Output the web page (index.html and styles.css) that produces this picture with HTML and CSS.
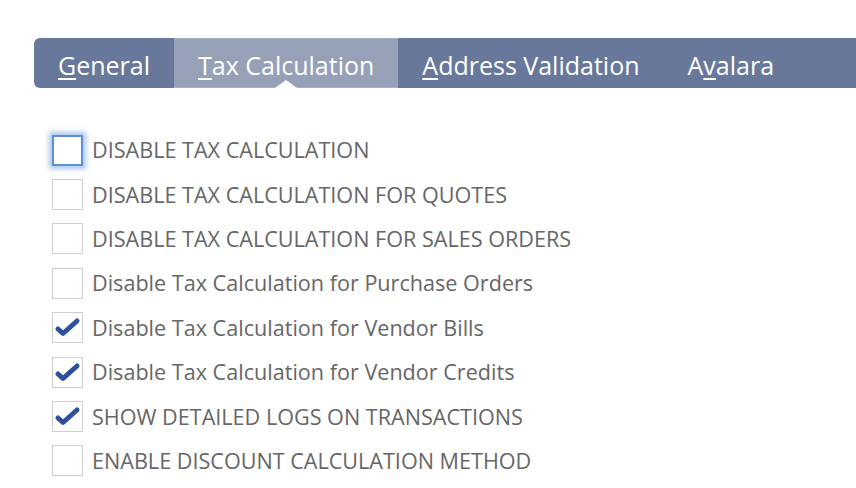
FILE: index.html
```html
<!DOCTYPE html>
<html>
  <head>
    <meta charset="utf-8">
    <title>Tax Settings</title>
    <link rel="stylesheet" href="styles.css">
  </head>
  <body>
    <!-- TABS -->
    <div class="tabs">
      <div class="tab"><u>G</u>eneral</div>
      <div class="tab active"><u>T</u>ax Calculation</div>
      <div class="tab"><u>A</u>ddress Validation</div>
      <div class="tab">A<u>v</u>alara</div>
    </div>
    <!-- OPTIONS -->
    <div class="options">
      <div class="option">
        <span class="box focus"></span>
        <span class="label">DISABLE TAX CALCULATION</span>
      </div>
      <div class="option">
        <span class="box"></span>
        <span class="label">DISABLE TAX CALCULATION FOR QUOTES</span>
      </div>
      <div class="option">
        <span class="box"></span>
        <span class="label">DISABLE TAX CALCULATION FOR SALES ORDERS</span>
      </div>
      <div class="option">
        <span class="box"></span>
        <span class="label">Disable Tax Calculation for Purchase Orders</span>
      </div>
      <div class="option">
        <span class="box"><svg class="check" viewBox="0 0 29 29"><path d="M5 16 L10 20.5 L24 8"/></svg></span>
        <span class="label">Disable Tax Calculation for Vendor Bills</span>
      </div>
      <div class="option">
        <span class="box"><svg class="check" viewBox="0 0 29 29"><path d="M5 16 L10 20.5 L24 8"/></svg></span>
        <span class="label">Disable Tax Calculation for Vendor Credits</span>
      </div>
      <div class="option">
        <span class="box"><svg class="check" viewBox="0 0 29 29"><path d="M5 16 L10 20.5 L24 8"/></svg></span>
        <span class="label">SHOW DETAILED LOGS ON TRANSACTIONS</span>
      </div>
      <div class="option">
        <span class="box"></span>
        <span class="label">ENABLE DISCOUNT CALCULATION METHOD</span>
      </div>
    </div>
  </body>
</html>
```

FILE: styles.css
```css
/* BASE */
html, body { margin: 0; padding: 0; background: #fff; }
body {
  font-family: "Open Sans", "Liberation Sans", sans-serif;
  padding: 38px 0 0 34px;
  overflow: hidden;
}
/* TAB BAR */
.tabs {
  display: flex;
  height: 50px;
  background: #67789a;
  border-radius: 6px 0 0 6px;
}
.tab {
  position: relative;
  display: flex;
  align-items: center;
  padding: 3px 24px 0;
  color: #fff;
  font-size: 25px;
  white-space: nowrap;
}
.tab u { text-decoration-thickness: 2px; text-underline-offset: 3px; }
.tab.active {
  background: #96a1b7;
  box-shadow: inset 0 1px 0 #a6b0c4, inset 0 -1px 0 #a6b0c4;
}
.tab.active:after {
  content: "";
  position: absolute;
  left: 50%;
  bottom: 0;
  margin-left: -11px;
  border-left: 11px solid transparent;
  border-right: 11px solid transparent;
  border-bottom: 8px solid #fff;
}
/* CHECKBOX LIST */
.options { padding-top: 40px; padding-left: 18px; }
.option {
  display: flex;
  align-items: center;
  height: 44.4px;
}
.box {
  width: 29px;
  height: 29px;
  border: 1px solid #cfcfcf;
  background: #fff;
  margin-right: 9px;
  flex-shrink: 0;
}
.box.focus {
  border: 2px solid #5a8fdc;
  width: 27px;
  height: 27px;
  box-shadow: 0 0 5px 3px rgba(90, 143, 220, 0.5);
}
.check { display: block; width: 29px; height: 29px; }
.check path {
  fill: none;
  stroke: #2d529b;
  stroke-width: 5;
  stroke-linecap: round;
  stroke-linejoin: round;
}
.label {
  font-size: 21.6px;
  color: #666;
  white-space: nowrap;
  margin-top: -1px;
}
```
